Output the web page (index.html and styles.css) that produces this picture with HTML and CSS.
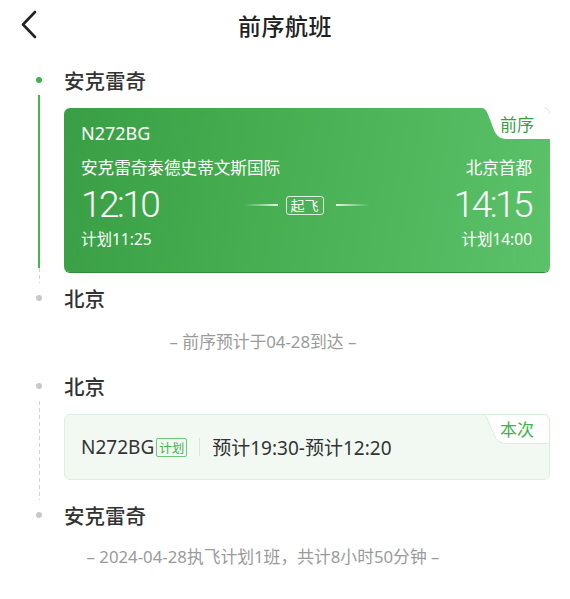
FILE: index.html
```html
<!DOCTYPE html>
<html lang="zh">
<head>
<meta charset="utf-8">
<title>前序航班</title>
<link rel="stylesheet" href="styles.css">
</head>
<body>
<div class="page">
  <header class="topbar">
    <svg class="back" width="40" height="50" viewBox="0 0 40 50">
      <polyline points="35,12 23,24.5 35,37" fill="none" stroke="#222" stroke-width="2.6" stroke-linecap="round" stroke-linejoin="round"/>
    </svg>
    <h1 class="title">前序航班</h1>
    <span class="spacer"></span>
  </header>

  <section class="timeline">
    <div class="stop">
      <div class="rail"><span class="dot dot-green"></span></div>
      <div class="name">安克雷奇</div>
    </div>

    <div class="seg">
      <div class="rail"><span class="line line-green"></span><span class="line line-dash short"></span></div>
      <div class="card card-prev">
        <svg class="tab" width="68" height="31" viewBox="0 0 68 31"><path d="M0 0 H62 a6 6 0 0 1 6 6 V31 H24 C14 31 12 22 9 14 C6 6 4 0 0 0 Z" fill="#fff"/></svg>
        <span class="tab-text tab-green">前序</span>
        <div class="reg">N272BG</div>
        <div class="route">
          <div class="end">
            <div class="apt">安克雷奇泰德史蒂文斯国际</div>
            <div class="time">12:10</div>
            <div class="plan">计划11:25</div>
          </div>
          <div class="mid">
            <span class="mline mline-l"></span>
            <span class="status">起飞</span>
            <span class="mline mline-r"></span>
          </div>
          <div class="end end-r">
            <div class="apt">北京首都</div>
            <div class="time">14:15</div>
            <div class="plan">计划14:00</div>
          </div>
        </div>
      </div>
    </div>

    <div class="stop">
      <div class="rail"><span class="dot"></span></div>
      <div class="name">北京</div>
    </div>

    <div class="note">– 前序预计于04-28到达 –</div>

    <div class="stop">
      <div class="rail"><span class="dot"></span></div>
      <div class="name">北京</div>
    </div>

    <div class="seg">
      <div class="rail"><span class="line line-dash"></span></div>
      <div class="card card-cur">
        <svg class="tab" width="68" height="30" viewBox="0 0 68 30"><path d="M0 0.5 H62 a5.5 5.5 0 0 1 5.5 5.5 V29.5 H24 C14 29.5 12 21 9 13.5 C6 6 4 0.5 0 0.5" fill="#fff" stroke="#d6eedb" stroke-width="1"/></svg>
        <span class="tab-text tab-cur">本次</span>
        <span class="reg2">N272BG</span>
        <span class="tag">计划</span>
        <span class="divider"></span>
        <span class="sched">预计19:30-预计12:20</span>
      </div>
    </div>

    <div class="stop">
      <div class="rail"><span class="dot"></span></div>
      <div class="name">安克雷奇</div>
    </div>

    <div class="foot">– 2024-04-28执飞计划1班，共计8小时50分钟 –</div>
  </section>
</div>
</body>
</html>
```

FILE: styles.css
```css
* { box-sizing: border-box; margin: 0; padding: 0; }
html, body { background: #fff; }
body {
  font-family: "Noto Sans", "Noto Sans CJK SC", sans-serif;
  color: #333;
  width: 570px;
  overflow: hidden;
}
.topbar {
  height: 50px;
  display: grid;
  grid-template-columns: 60px 1fr 60px;
  align-items: center;
}
.back { display: block; }
.title {
  font-family: "Noto Sans CJK SC", sans-serif;
  text-align: center;
  font-size: 23px;
  font-weight: 500;
  color: #222;
  line-height: 46px;
  letter-spacing: 0.5px;
}
.timeline { display: flex; flex-direction: column; padding-top: 15px; }
.stop {
  display: flex;
  height: 30px;
  align-items: center;
}
.rail {
  width: 64px;
  flex: none;
  position: relative;
  align-self: stretch;
  display: flex;
  flex-direction: column;
  align-items: flex-start;
  padding-left: 38px;
}
.stop .rail { justify-content: center; padding-left: 36px; }
.dot {
  width: 6px;
  height: 6px;
  border-radius: 50%;
  background: #c9c9c9;
}
.dot-green { background: #3cb44b; }
.name {
  font-family: "Noto Sans CJK SC", sans-serif;
  font-size: 20.5px;
  font-weight: 500;
  color: #333;
  line-height: 30px;
}
.seg { display: flex; }
.line { width: 2px; display: block; }
.line-green { flex: 1; background: #45b451; }
.line-dash {
  flex: 1;
  width: 1px;
  margin-left: 1px;
  background: repeating-linear-gradient(to bottom, #cdd3de 0 4px, transparent 4px 7px);
}
.line-dash.short { flex: none; height: 15px; }
.card {
  position: relative;
  width: 486px;
  border-radius: 6px;
  margin: 13px 0 11px;
}
.card-prev {
  height: 164px;
  background: linear-gradient(100deg, #3a9f44 0%, #46ad51 40%, #5cc26a 100%);
  color: #fff;
  padding: 12px 18px 0 17px;
  box-shadow: 0 1px 0 #2f8e3a;
}
.tab { position: absolute; top: 0; right: 0; display: block; }
.tab-text {
  font-family: "Noto Sans CJK SC", sans-serif;
  position: absolute;
  top: 0;
  right: 11px;
  width: 44px;
  height: 31px;
  line-height: 31px;
  text-align: center;
  font-size: 17px;
}
.tab-green { color: #3a9d45; }
.tab-cur { color: #3db34c; height: 30px; line-height: 30px; }
.reg {
  font-size: 18px;
  line-height: 26px;
}
.route {
  display: grid;
  grid-template-columns: minmax(0, 1fr) auto minmax(0, 1fr);
  margin-top: 10px;
}
.end { display: flex; flex-direction: column; white-space: nowrap; }
.end-r { align-items: flex-end; }
.apt { font-family: "Noto Sans CJK SC", sans-serif; font-size: 16.6px; line-height: 22px; }
.time {
  font-family: "Roboto", sans-serif;
  font-weight: 300;
  font-size: 37px;
  line-height: 44px;
  letter-spacing: -2.5px;
  margin-top: 5px;
}
.end-r .time { margin-right: 1px; }
.plan {
  font-size: 15.5px;
  line-height: 20px;
  margin-top: 2px;
}
.mid {
  display: flex;
  align-items: center;
  gap: 8px;
  margin-top: 27px;
  height: 44px;
}
.mline { display: block; width: 34px; height: 2px; }
.mline-l { background: linear-gradient(to right, rgba(255,255,255,0), rgba(255,255,255,0.85)); }
.mline-r { background: linear-gradient(to left, rgba(255,255,255,0), rgba(255,255,255,0.85)); margin-left: 4px; }
.status {
  font-family: "Noto Sans CJK SC", sans-serif;
  font-size: 14px;
  line-height: 17px;
  padding: 0 4px;
  border: 1px solid rgba(255,255,255,0.8);
  border-radius: 3px;
}
.card-cur {
  height: 66px;
  background: #f2f9f3;
  border: 1px solid #ddefe1;
  display: flex;
  align-items: center;
  padding-left: 16px;
  margin-bottom: 20px;
}
.card-cur .tab { top: -1px; right: -1px; }
.card-cur .tab-text { top: -1px; right: 10px; }
.reg2 {
  font-size: 19px;
  color: #333;
}
.tag {
  font-family: "Noto Sans CJK SC", sans-serif;
  font-size: 12.5px;
  line-height: 17px;
  color: #3db34c;
  border: 1px solid #6cc878;
  border-radius: 2px;
  padding: 0 2px;
  margin-left: 2px;
}
.divider {
  width: 1px;
  height: 18px;
  background: #d9e3dc;
  margin: 0 12px;
}
.sched { font-size: 19px; color: #333; }
.note, .foot {
  text-align: center;
  color: #9a9a9a;
  font-size: 16.8px;
  padding-right: 44px;
}
.note { height: 58px; line-height: 58px; }
.foot { height: 54px; line-height: 54px; }
```
